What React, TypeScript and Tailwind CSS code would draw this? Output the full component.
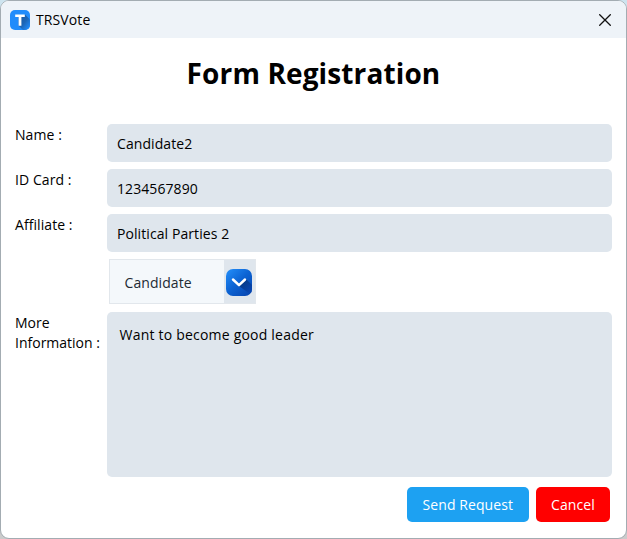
import type { ReactNode } from 'react';

function AppLogo() {
  return (
    <svg width="20" height="20" viewBox="0 0 20 20">
      <defs>
        <clipPath id="logo-tile">
          <rect width="20" height="20" rx="5" />
        </clipPath>
        <linearGradient id="logo-shade" x1="0.2" y1="0.2" x2="0.9" y2="0.9">
          <stop offset="0" stopColor="#1c5da6" />
          <stop offset="0.45" stopColor="#1d66b8" />
          <stop offset="1" stopColor="#218cfb" />
        </linearGradient>
      </defs>
      <g clipPath="url(#logo-tile)">
        <rect width="20" height="20" fill="#218cfb" />
        <path d="M15 4.5 L20 9.5 V20 H13 L8.5 15.5 V7 Z" fill="url(#logo-shade)" />
        <path d="M5.2 4.5 H14.8 V7 H11.4 V15.7 H8.6 V7 H5.2 Z" fill="#fff" />
      </g>
    </svg>
  );
}

function DropIcon() {
  return (
    <svg width="26" height="27" viewBox="0 0 26 27">
      <defs>
        <clipPath id="drop-tile">
          <rect width="26" height="27" rx="7" />
        </clipPath>
        <linearGradient id="drop-fill" x1="0" y1="0" x2="0.9" y2="1">
          <stop offset="0" stopColor="#2490fb" />
          <stop offset="0.5" stopColor="#0c63d3" />
          <stop offset="1" stopColor="#0645b0" />
        </linearGradient>
        <linearGradient id="drop-shade" x1="0.2" y1="0.2" x2="0.8" y2="0.9">
          <stop offset="0" stopColor="#053a86" />
          <stop offset="1" stopColor="#0645b0" />
        </linearGradient>
      </defs>
      <g clipPath="url(#drop-tile)">
        <rect width="26" height="27" fill="url(#drop-fill)" />
        <path d="M20 10 L26 16 V24 L22 23.5 L13 17 Z" fill="url(#drop-shade)" />
        <path d="M7 10.5 L13 16.2 L19 10.5" fill="none" stroke="#fff" strokeWidth="2.5" strokeLinecap="round" strokeLinejoin="round" />
      </g>
    </svg>
  );
}

function Row({ label, children }: { label: ReactNode; children: ReactNode }) {
  return (
    <div className="flex h-[45px]">
      <label className="w-[92px] shrink-0 pt-px leading-5 tracking-[0.07px]">{label}</label>
      {children}
    </div>
  );
}

function Field({ value }: { value: string }) {
  return (
    <div className="flex h-[37.5px] grow items-center rounded-[5px] bg-[#dfe6ed] pl-2.5">
      <span className="relative top-px tracking-[0.08px]">{value}</span>
    </div>
  );
}

export default function App() {
  return (
    <div className="h-[539px] w-[627px] overflow-hidden bg-linear-to-b from-[#cde4ef] to-[#cbcbcb] font-['Open_Sans','Noto_Sans',sans-serif] text-[14px] text-black">
      <div className="flex h-[539px] flex-col overflow-hidden rounded-[9px] border border-[#a3acb2] bg-white">
        <header className="flex h-[37px] shrink-0 items-center bg-[#eef3f8] pl-[9px] pr-[15px]">
          <AppLogo />
          <span className="ml-[6px] text-[14px] tracking-[0.1px]">TRSVote</span>
          <svg className="ml-auto" width="12" height="12" viewBox="0 0 12 12" stroke="#111" strokeWidth="1.3">
            <path d="M0.3 0.3 L11.7 11.7 M11.7 0.3 L0.3 11.7" />
          </svg>
        </header>
        <h1 className="h-[86px] pt-[15px] text-center text-[28px] leading-10 font-bold tracking-[0.12px]">
          Form Registration
        </h1>
        <main className="px-[14px]">
          <Row label="Name :"><Field value="Candidate2" /></Row>
          <Row label="ID Card :"><Field value="1234567890" /></Row>
          <Row label="Affiliate :"><Field value="Political Parties 2" /></Row>
          <div className="ml-[94px] flex h-[45px] w-[147px] border border-[#e2e7ec] bg-[#f4f8fb]">
            <span className="grow pl-[14.5px] leading-[45px] tracking-[0.08px] text-[#222a33]">Candidate</span>
            <div className="flex w-[31px] items-center bg-[#dfe6ed] pt-px pl-[2px]"><DropIcon /></div>
          </div>
          <div className="mt-2 flex">
            <label className="w-[92px] shrink-0 pt-px leading-5">More<br />Information :</label>
            <div className="h-[164.5px] grow rounded-[5px] bg-[#dfe6ed] pt-[13px] pl-[12.5px] leading-5 tracking-[0.21px]">Want to become good leader</div>
          </div>
          <div className="mt-[10.5px] mr-[2px] flex justify-end gap-[7.5px] text-white">
            <button className="h-[35px] w-[121.5px] rounded-[5px] bg-[#1da1f2] tracking-[0.08px]">Send Request</button>
            <button className="h-[35px] w-[74px] rounded-[5px] bg-[#ff0000] tracking-[0.12px]">Cancel</button>
          </div>
        </main>
      </div>
    </div>
  );
}
